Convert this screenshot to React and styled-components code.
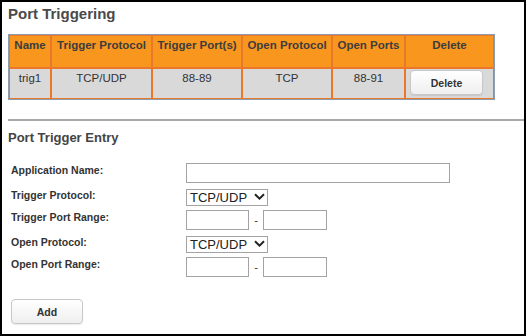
import React from "react";
import styled, { createGlobalStyle } from "styled-components";

const Global = createGlobalStyle`
  html, body {
    margin: 0;
    padding: 0;
    background: #fff;
  }
  body {
    font-family: "Liberation Sans", Arial, sans-serif;
  }
`;

const Frame = styled.div`
  box-sizing: border-box;
  width: 526px;
  height: 336px;
  border: 2px solid #000;
  padding: 3px 0 0 6px;
  overflow: hidden;
`;

const Title = styled.h1`
  margin: 0;
  font-size: 15px;
  line-height: 18px;
  font-weight: bold;
  color: #4a4a4a;
`;

const Table = styled.table`
  margin-top: 11px;
  width: 487px;
  table-layout: fixed;
  border-collapse: separate;
  border-spacing: 0;
  border: 1px solid #8d9db0;
  font-size: 11.5px;
  color: #333;
`;

const Th = styled.th`
  box-sizing: border-box;
  width: ${(p) => p.$w}px;
  height: 33px;
  padding: 2px 0 0;
  vertical-align: top;
  text-align: center;
  background: #f8961e;
  border: 1px solid #e9782a;
  font-weight: bold;
  line-height: 14px;
  white-space: nowrap;
  color: #3d3d3d;
`;

const Td = styled.td`
  box-sizing: border-box;
  height: 31px;
  padding: ${(p) => (p.$action ? "1px 0 0 4px" : "2px 0 0")};
  vertical-align: top;
  text-align: ${(p) => (p.$action ? "left" : "center")};
  background: #d9d9d9;
  border: 1px solid #e9782a;
  line-height: 14px;
`;

const Button = styled.button`
  box-sizing: border-box;
  width: ${(p) => p.$w}px;
  height: 25px;
  margin: 0;
  padding: 0;
  border: 1px solid #c8c8c8;
  border-radius: 4px;
  background: linear-gradient(#ffffff, #efefef);
  box-shadow: 0 1px 1px rgba(0, 0, 0, 0.08);
  font-family: "Liberation Sans", Arial, sans-serif;
  font-size: 10.5px;
  font-weight: bold;
  color: #333;
`;

const Rule = styled.hr`
  margin: 19px 0 0;
  height: 0;
  border: 0;
  border-top: 2px solid #a8a8a8;
`;

const SubTitle = styled.h2`
  margin: 9px 0 0;
  font-size: 13px;
  line-height: 16px;
  font-weight: bold;
  color: #444;
`;

const Form = styled.div`
  margin: 17px 0 0 3px;
  display: grid;
  grid-template-columns: 175px auto;
  row-gap: 5px;
  align-items: start;
`;

const Label = styled.label`
  font-size: 10.5px;
  line-height: 14px;
  font-weight: bold;
  color: #333;
`;

const Field = styled.div`
  display: flex;
  align-items: center;
`;

const Input = styled.input`
  box-sizing: border-box;
  width: ${(p) => p.$w}px;
  height: 20px;
  margin: 0;
  padding: 0 3px;
  border: 1px solid #a3a3a3;
  border-radius: 0;
  font-family: "Liberation Sans", Arial, sans-serif;
  font-size: 12px;
`;

const Dash = styled.span`
  width: 14px;
  text-align: center;
  font-size: 11px;
  color: #333;
`;

const SelectWrap = styled.div`
  position: relative;
  width: 82px;
  height: 17px;
`;

const Select = styled.select`
  box-sizing: border-box;
  width: 100%;
  height: 100%;
  margin: 0;
  padding: 0 0 0 3px;
  appearance: none;
  border: 1px solid #a3a3a3;
  border-radius: 0;
  background: #fff;
  font-family: "Liberation Sans", Arial, sans-serif;
  font-size: 13px;
  line-height: 15px;
  color: #222;
`;

const Chevron = styled.svg`
  position: absolute;
  right: 3px;
  top: 5px;
  pointer-events: none;
`;

const Actions = styled.div`
  margin: 22px 0 0 3px;
`;

const cols = [
  ["Name", 42],
  ["Trigger Protocol", 101],
  ["Trigger Port(s)", 90],
  ["Open Protocol", 90],
  ["Open Ports", 73],
  ["Delete", 89],
];

function Protocol() {
  return (
    <SelectWrap>
      <Select defaultValue="TCP/UDP">
        <option>TCP/UDP</option>
        <option>TCP</option>
        <option>UDP</option>
      </Select>
      <Chevron width="11" height="7" viewBox="0 0 11 7">
        <path d="M1 1.2 L5.5 5.6 L10 1.2" fill="none" stroke="#222" strokeWidth="2" />
      </Chevron>
    </SelectWrap>
  );
}

function Range() {
  return (
    <Field>
      <Input $w={63} />
      <Dash>-</Dash>
      <Input $w={64} />
    </Field>
  );
}

export default function App() {
  return (
    <Frame>
      <Global />
      <Title>Port Triggering</Title>
      <Table>
        <thead>
          <tr>
            {cols.map(([name, w]) => (
              <Th key={name} $w={w}>
                {name}
              </Th>
            ))}
          </tr>
        </thead>
        <tbody>
          <tr>
            <Td>trig1</Td>
            <Td>TCP/UDP</Td>
            <Td>88-89</Td>
            <Td>TCP</Td>
            <Td>88-91</Td>
            <Td $action>
              <Button $w={73}>Delete</Button>
            </Td>
          </tr>
        </tbody>
      </Table>
      <Rule />
      <SubTitle>Port Trigger Entry</SubTitle>
      <Form>
        <Label>Application Name:</Label>
        <Field>
          <Input $w={264} />
        </Field>
        <Label>Trigger Protocol:</Label>
        <Protocol />
        <Label>Trigger Port Range:</Label>
        <Range />
        <Label>Open Protocol:</Label>
        <Protocol />
        <Label>Open Port Range:</Label>
        <Range />
      </Form>
      <Actions>
        <Button $w={72}>Add</Button>
      </Actions>
    </Frame>
  );
}
